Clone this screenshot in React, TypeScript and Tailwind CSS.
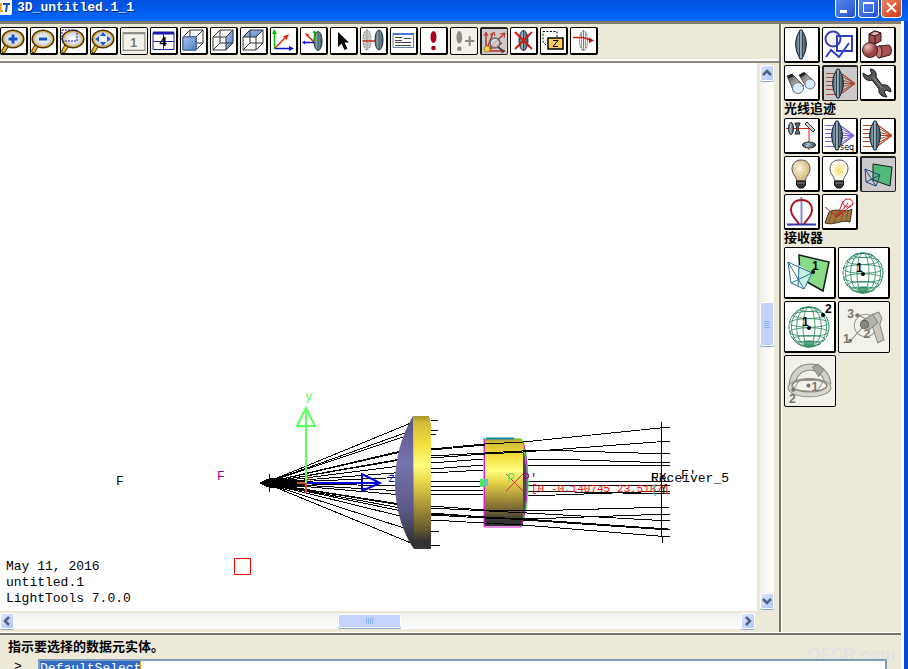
import type { ReactNode } from 'react';

type Variant = 'normal' | 'disabled' | 'pressed';

const variants: Record<Variant, string> = {
  normal: 'bg-white border-t border-l border-r-2 border-b-2 border-black',
  disabled: 'bg-[#f3f2ea] border border-black',
  pressed: 'bg-[#cbc9cb] border-t-2 border-l-2 border-r border-b border-[#222]',
};

const sizes = {
  tool: 'size-7',
  small: 'size-9',
  large: 'size-[52px]',
};

interface ToolProps {
  label: string;
  size?: keyof typeof sizes;
  variant?: Variant;
  children: ReactNode;
}

function Tool({ label, size = 'tool', variant = 'normal', children }: ToolProps) {
  const box = size === 'tool' ? '0 0 25 25' : size === 'small' ? '0 0 33 33' : '0 0 49 49';
  return (
    <button
      type="button"
      aria-label={label}
      title={label}
      disabled={variant === 'disabled'}
      className={`shrink-0 rounded-xs ${sizes[size]} ${variants[variant]}`}
    >
      <svg viewBox={box} className="size-full" fill="none">
        {children}
      </svg>
    </button>
  );
}

/* ---------- toolbar icons (25 x 25) ---------- */

function Magnifier({ children }: { children?: ReactNode }) {
  return (
    <>
      <path d="M6 17 L2.500 23" stroke="#5a3c08" strokeWidth="4.500" strokeLinecap="round" />
      <path d="M6 17 L2.500 23" stroke="#e8b830" strokeWidth="2.500" strokeLinecap="round" />
      <ellipse cx="12" cy="11" rx="10" ry="8" fill="#e4e6ea" stroke="#4a3208" strokeWidth="3" />
      <ellipse cx="12" cy="11" rx="9.500" ry="7.500" fill="url(#glass)" stroke="#e0b030" strokeWidth="1.200" />
      {children}
    </>
  );
}

function Cube({ face }: { face: 'front' | 'right' | 'top' }) {
  const shade = {
    front: 'M2 9 H15 V22 H2 Z',
    right: 'M15 9 L22 2 V15 L15 22 Z',
    top: 'M2 9 L9 2 H22 L15 9 Z',
  };
  return (
    <>
      <path d={shade[face]} fill="url(#faceBlue)" />
      <path d="M2 9 H15 V22 H2 Z M2 9 L9 2 H22 L15 9 M22 2 V15 L15 22 M9 2 V15 H22 M9 15 L2 22" stroke="#333" />
      {face === 'front' && <path d="M2 9 H15 V22 H2 Z" fill="url(#faceBlue)" stroke="#345ea8" />}
    </>
  );
}

function MiniLens({ x, y, h = 19, w = 4, ghost = false }: { x: number; y: number; h?: number; w?: number; ghost?: boolean }) {
  return (
    <>
      <ellipse
        cx={x}
        cy={y}
        rx={w}
        ry={h / 2}
        fill={ghost ? '#f4f4f4' : 'url(#steel)'}
        stroke={ghost ? '#666' : '#23333d'}
        strokeDasharray={ghost ? '2 1' : undefined}
      />
      <path d={`M${x} ${y - h / 2} V${y + h / 2}`} stroke={ghost ? '#777' : '#31424d'} />
      {ghost && <path d={`M${x - 2} ${y - h / 2 + 2} V${y + h / 2 - 2} M${x + 2} ${y - h / 2 + 2} V${y + h / 2 - 2}`} stroke="#999" />}
    </>
  );
}

function Toolbar() {
  return (
    <div className="flex h-[39px] shrink-0 items-start gap-0.5 border-b-2 border-[#8a887c] pt-[3px] shadow-[inset_0_-2px_0_#ffffff]">
      <Tool label="Zoom in">
        <Magnifier>
          <path d="M12 6.500 V15.500 M7.500 11 H16.500" stroke="#1450c8" strokeWidth="3" />
        </Magnifier>
      </Tool>
      <Tool label="Zoom out">
        <Magnifier>
          <path d="M8 11 H16" stroke="#1450c8" strokeWidth="3" />
        </Magnifier>
      </Tool>
      <Tool label="Zoom window">
        <Magnifier />
        <path d="M1 2 H16 V13 H1 Z" stroke="#1818b0" strokeDasharray="2 1" />
      </Tool>
      <Tool label="Zoom to fit">
        <Magnifier>
          <path d="M12 4 L15 8 H9 Z M12 18 L15 14 H9 Z M4 11 L8 8 V14 Z M20 11 L16 8 V14 Z" fill="#1c5cd0" />
        </Magnifier>
      </Tool>
      <Tool label="Single view" variant="disabled">
        <path d="M2 4.500 H23 V21.500 H2 Z" stroke="#8c8c84" />
        <path d="M2 5 H23" stroke="#8c8c84" strokeWidth="2" />
        <text x="9" y="18" fontSize="12" fontWeight="bold" fill="#77776f" fontFamily="Liberation Sans">1</text>
      </Tool>
      <Tool label="Four views">
        <path d="M2 4.500 H23 V21.500 H2 Z M12.500 5 V21 M2 13.500 H23" stroke="#2020a8" />
        <path d="M2 5 H23" stroke="#1818b0" strokeWidth="3" />
        <text x="8.500" y="18" fontSize="13" fontWeight="bold" fill="#000" fontFamily="Liberation Sans">4</text>
      </Tool>
      <Tool label="Front view"><Cube face="front" /></Tool>
      <Tool label="Side view"><Cube face="right" /></Tool>
      <Tool label="Top view"><Cube face="top" /></Tool>
      <Tool label="Axes">
        <path d="M3.500 21 V5" stroke="#08b808" strokeWidth="1.500" />
        <path d="M3.500 1 L6 6 H1 Z" fill="#08b808" />
        <path d="M4 20.500 H19" stroke="#1010d8" strokeWidth="1.500" />
        <path d="M23 20.500 L18 18 V23 Z" fill="#1010d8" />
        <path d="M4 20 L14 10" stroke="#e02010" strokeWidth="1.500" />
        <path d="M18 6 L15.500 12 L12 8.500 Z" fill="#e02010" />
      </Tool>
      <Tool label="Lens axes">
        <MiniLens x={17} y={13} />
        <path d="M13.500 14 V4" stroke="#08b808" strokeWidth="1.500" />
        <path d="M13 14 L6 7" stroke="#e02010" strokeWidth="1.500" />
        <path d="M13 14.500 H3" stroke="#1010d8" strokeWidth="1.500" />
        <path d="M13.500 2 L15.500 5 H11.500 Z" fill="#08b808" />
        <path d="M4 5 L8 6.500 L6 9 Z" fill="#e02010" />
        <path d="M1 14.500 L4 12.500 V16.500 Z" fill="#1010d8" />
      </Tool>
      <Tool label="Select">
        <path d="M7 4 V19 L10.500 15.500 L13.500 22 L16.500 20.500 L13.500 14.500 H18 Z" fill="#000" />
      </Tool>
      <Tool label="Move">
        <MiniLens x={6} y={12} h={20} ghost />
        <path d="M2 13 H14" stroke="#d02818" strokeWidth="1.500" />
        <MiniLens x={18} y={12} h={20} />
      </Tool>
      <Tool label="Properties">
        <path d="M2 5.500 H22.500 V19.500 H2 Z" fill="#fff" stroke="#5c80b8" />
        <path d="M2 6 H23" stroke="#4878d0" strokeWidth="2" />
        <path d="M4 9.500 H11 M4 12.500 H11 M4 14.500 H20 M4 17.500 H20 M13 10.500 H20" stroke="#444" />
      </Tool>
      <Tool label="Recalculate">
        <ellipse cx="12.500" cy="9" rx="3" ry="6" fill="#a8001c" />
        <circle cx="12.500" cy="20" r="2.300" fill="#a8001c" />
      </Tool>
      <Tool label="Recalculate more" variant="disabled">
        <ellipse cx="8" cy="9" rx="2.800" ry="6" fill="#8c8c84" />
        <circle cx="8" cy="20" r="2.200" fill="#8c8c84" />
        <path d="M18 8 V17 M13.500 12.500 H22.500" stroke="#8c8c84" strokeWidth="2" />
      </Tool>
      <Tool label="Ray inspect" variant="pressed">
        <path d="M4 22 V4 M4 22 L11 4 M4 22 L22 5 M4 22 H23 M4 22 L20 14" stroke="#c03028" strokeWidth="1.500" />
        <path d="M2 7 L4 3 L6 7 M8 6 L12 3 L13 7 M18 5 L23 4 L22 9 M19 20 L23 22 L19 24" stroke="#c03028" />
        <circle cx="13" cy="14" r="5" fill="#d8dce0" fillOpacity="0.700" stroke="#666" strokeWidth="1.500" />
        <path d="M16 18 L22 23" stroke="#444" strokeWidth="2" />
        <circle cx="5" cy="20" r="3" fill="#f8d848" stroke="#a08020" />
      </Tool>
      <Tool label="Delete">
        <MiniLens x={12.5} y={12.5} h={20} w={4.5} />
        <path d="M4 4 L21 21 M21 4 L4 21" stroke="#d01c10" strokeWidth="2" />
      </Tool>
      <Tool label="Z order">
        <path d="M2 3.500 H16 V17 H5 L2 14 Z" stroke="#000" strokeDasharray="2 1.500" />
        <path d="M7 10 H22 V21 H7 Z" fill="#ffcc60" stroke="#000" strokeWidth="1.500" />
        <path d="M12 12.500 H17 L12 18.500 H17" stroke="#000" />
      </Tool>
      <Tool label="Ray through lens">
        <MiniLens x={12.5} y={12.5} h={20} ghost />
        <path d="M2 9.500 H12 L20 12" stroke="#d01c10" strokeWidth="1.500" />
        <path d="M23 12.500 L18 9.500 V15 Z" fill="#c01010" />
      </Tool>
    </div>
  );
}

/* ---------- palette icons ---------- */

function Lens({ x = 16 }: { x?: number }) {
  return (
    <>
      <path d={`M${x - 1} 2 Q${x - 10} 16 ${x - 1} 31 H${x + 1} Q${x + 10} 16 ${x + 1} 2 Z`} fill="url(#steel)" stroke="#1c2830" />
      <path d={`M${x - 1.5} 2 V31 M${x + 1.5} 2 V31`} stroke="#33444f" />
    </>
  );
}

function RayFan({ color }: { color: string }) {
  return (
    <>
      <path d="M2 6.500 H13 M2 10.500 H12 M2 14.500 H12 M2 18.500 H12 M2 22.500 H12 M2 27.500 H13" stroke={color} />
      <path d="M15 5 L31 16.500 L15 28 M17 9 L31 16.500 L17 24 M17 13 L31 16.500 L17 20 M17 16.500 H31" stroke={color} />
      <Lens x={14} />
      <path d="M17 6 L31 16.500 L17 27" stroke={color} />
    </>
  );
}

function Bulb({ lit = false }: { lit?: boolean }) {
  return (
    <>
      <path d="M16 3 C10 3 7 7 7 12 C7 17 11 19 12 24 H20 C21 19 25 17 25 12 C25 7 22 3 16 3 Z" fill={lit ? 'url(#bulbLit)' : 'url(#bulb)'} stroke="#555" />
      <path d="M11.500 24 H20.500 V28 L18 31 H14 L11.500 28 Z" fill="#333" stroke="#111" />
      <path d="M12 26 H20" stroke="#888" />
    </>
  );
}

function WireSphere({ cx, cy, r }: { cx: number; cy: number; r: number }) {
  const parallels = [-0.88, -0.6, -0.2, 0.25, 0.6, 0.82];
  return (
    <g stroke="#26855a">
      <circle cx={cx} cy={cy} r={r} strokeDasharray="5 1" />
      {[0.3, 0.62, 0.88].map((k) => (
        <ellipse key={k} cx={cx} cy={cy} rx={r * k} ry={r} strokeWidth="0.800" />
      ))}
      {parallels.map((k) => (
        <ellipse key={k} cx={cx} cy={cy + r * k} rx={r * Math.sqrt(1 - k * k)} ry={r * Math.sqrt(1 - k * k) * 0.22} strokeWidth="0.800" />
      ))}
      <ellipse cx={cx} cy={cy + r * 0.82} rx={r * 0.25} ry={r * 0.1} fill="#58a884" />
    </g>
  );
}

function Mark({ x, y, gray = false, children }: { x: number; y: number; gray?: boolean; children: string }) {
  return (
    <text x={x} y={y} fontSize="12" fontWeight="bold" fill={gray ? '#77776f' : '#000'} fontFamily="Liberation Sans">
      {children}
    </text>
  );
}

function SectionLabel({ children }: { children: string }) {
  return <h2 className="h-[17px] text-[13px] leading-4 font-bold">{children}</h2>;
}

function Palette() {
  return (
    <aside className="w-[122px] shrink-0 border-l-2 border-[#77756a] pt-[3px] pl-[3px] shadow-[inset_1px_0_0_#ffffff]">
      <div className="grid grid-cols-[repeat(3,36px)] gap-0.5">
        <Tool label="Lenses" size="small"><Lens /></Tool>
        <Tool label="2D shapes" size="small">
          <circle cx="10" cy="11" r="7.500" stroke="#3040c0" strokeWidth="2" />
          <path d="M14 8 H29 V23 H14 Z M3 29 L8 22 L16 29 L26 15" stroke="#3040c0" strokeWidth="2" />
        </Tool>
        <Tool label="3D solids" size="small">
          <path d="M8 6 L14 3 L20 5 V13 L14 16 L8 14 Z" fill="#a05050" stroke="#301010" />
          <path d="M8 6 L14 3 L20 5 L14 8 Z" fill="#e0b0b0" stroke="#301010" />
          <path d="M14 8 V16" stroke="#301010" />
          <path d="M18 18 L28 17 C31 19 31 25 29 27 L18 30 Z" fill="#a85050" stroke="#401818" />
          <ellipse cx="18" cy="24" rx="3" ry="6" fill="#c07878" stroke="#401818" />
          <circle cx="9" cy="22" r="7.500" fill="url(#redBall)" stroke="#401818" />
        </Tool>
        <Tool label="View" size="small">
          <path d="M2 10 L8 9 L19 20 L9 26 Z" fill="url(#metal)" stroke="#555" />
          <path d="M14 9 L20 7 L29 15 L22 22 Z" fill="url(#metal)" stroke="#555" />
          <path d="M3 11 L8 9 M15 10 L20 7" stroke="#222" strokeWidth="3" />
          <circle cx="13" cy="22" r="5.500" fill="#d8ecff" stroke="#777" />
          <circle cx="25" cy="18" r="5" fill="#d8ecff" stroke="#777" />
        </Tool>
        <Tool label="Ray trace" size="small" variant="pressed"><RayFan color="#a84830" /></Tool>
        <Tool label="Utilities" size="small">
          <path
            d="M2 7 L7 10 L11 8 L9 3 C14 3 16 7 15 11 L21 19 C26 18 30 21 30 26 L25 24 L23 26 L26 31 C21 31 17 28 18 23 L11 14 C6 16 2 12 2 7 Z"
            fill="#55585a"
            stroke="#151515"
          />
          <path d="M12 11 L21 22" stroke="#9a9c9e" />
        </Tool>
      </div>
      <SectionLabel>光线追迹</SectionLabel>
      <div className="grid grid-cols-[repeat(3,36px)] gap-0.5">
        <Tool label="Optical path" size="small">
          <path d="M1 9.500 H24 V25" stroke="#d82010" />
          <ellipse cx="6" cy="9.500" rx="2.500" ry="6" fill="url(#steel)" stroke="#222" />
          <path d="M10 4 H15 L13 9.500 L15 15 H10 L12 9.500 Z" fill="#5a7484" stroke="#222" />
          <path d="M20 5 L22 3 L30 11 L28 13 Z" fill="#ccc" stroke="#333" />
          <ellipse cx="24" cy="26" rx="6.500" ry="3" fill="url(#steel)" stroke="#222" />
          <path d="M24 28 V31" stroke="#d82010" />
        </Tool>
        <Tool label="Sequential rays" size="small">
          <RayFan color="#7860e0" />
          <text x="17" y="31" fontSize="8" fill="#000" fontFamily="DejaVu Sans">seq</text>
        </Tool>
        <Tool label="Ray fan" size="small"><RayFan color="#b84828" /></Tool>
        <Tool label="Source" size="small"><Bulb /></Tool>
        <Tool label="Lit source" size="small"><Bulb lit /></Tool>
        <Tool label="Receiver" size="small" variant="pressed">
          <path d="M11 6 L30 9 L28 28 L11 22 Z" fill="#50b878" stroke="#102018" />
          <path d="M3 11 L18 17 L14 28 L4 24 Z M3 11 L14 28 M18 17 L4 24" stroke="#204878" />
        </Tool>
        <Tool label="Intensity" size="small">
          <path d="M16.500 2 V30" stroke="#8888d0" strokeWidth="2" />
          <path d="M2 29.500 H31" stroke="#3038b0" strokeWidth="2" />
          <path d="M16.500 5 C9 5 6 10 6 15 C6 21 11 24 14 29 M19 29 C22 24 27 21 27 15 C27 10 24 5 16.500 5" stroke="#a01820" strokeWidth="2" />
        </Tool>
        <Tool label="Scatter" size="small">
          <path d="M6 17 C14 12 22 19 29 14 L27 27 C19 24 11 31 2 28 Z" fill="#a07840" stroke="#403018" />
          <path d="M9 17 L6 28 M14 17 L11 29 M20 17 L18 27 M25 16 L23 26" stroke="#785828" />
          <path d="M2 12 L14 22 L20 6 M14 22 L30 9 M14 22 L25 8" stroke="#d01828" />
          <ellipse cx="25" cy="8" rx="5" ry="4" stroke="#d01828" />
        </Tool>
      </div>
      <SectionLabel>接收器</SectionLabel>
      <div className="grid grid-cols-[repeat(2,52px)] gap-0.5">
        <Tool label="Plane receiver" size="large">
          <path d="M14 7 L44 14 L38 43 L15 30 Z" fill="#88dc88" stroke="#102018" strokeWidth="1.500" />
          <path d="M14 17 L27 25 L19 40 L14 34 Z" fill="#c8f0e4" />
          <path d="M3 14 L27 25 L19 41 L6 35 Z M3 14 L19 41 M6 35 L27 25 M14 19 L13 38" stroke="#28708c" />
          <circle cx="28" cy="24" r="2" fill="#000" />
          <Mark x={27} y={22}>1</Mark>
        </Tool>
        <Tool label="Sphere receiver" size="large">
          <WireSphere cx={24} cy={25} r={20} />
          <circle cx="24" cy="26" r="2" fill="#000" />
          <Mark x={17} y={24}>1</Mark>
        </Tool>
        <Tool label="Two point sphere receiver" size="large">
          <WireSphere cx={24} cy={25} r={20} />
          <circle cx="24" cy="26" r="2" fill="#000" />
          <circle cx="38" cy="13" r="2" fill="#000" />
          <Mark x={17} y={24}>1</Mark>
          <Mark x={40} y={11}>2</Mark>
        </Tool>
        <Tool label="Aimed receiver" size="large" variant="disabled">
          <circle cx="26" cy="23" r="11" stroke="#999990" />
          <path d="M33 12 L39 10 L42 16 L40 22 L44 37 L38 40 L32 22 Z" fill="#c8c8c0" stroke="#88887e" />
          <path d="M11 38 L26 22 M19 13 L36 21" stroke="#88887e" />
          <path d="M22 19 L33 12 L38 20 L30 27 Z" fill="#b4b4ac" stroke="#88887e" />
          <circle cx="25" cy="22" r="4" fill="#88887e" stroke="#66665e" />
          <circle cx="11" cy="38" r="2" fill="#77776f" />
          <circle cx="18" cy="13" r="2" fill="#77776f" />
          <Mark x={8} y={16} gray>3</Mark>
          <Mark x={4} y={40} gray>1</Mark>
          <Mark x={24} y={35} gray>2</Mark>
        </Tool>
        <Tool label="Goniometer receiver" size="large" variant="disabled">
          <path d="M7 29 C8 5 40 5 42 28" stroke="#88887e" strokeWidth="7" />
          <path d="M7 29 C8 5 40 5 42 28" stroke="#d2d2ca" strokeWidth="5" />
          <path d="M27 11 L32 8 L38 13 L33 20 Z" fill="#a4a49c" stroke="#88887e" />
          <ellipse cx="24" cy="31" rx="21" ry="9" fill="#d8d8d0" stroke="#88887e" />
          <ellipse cx="24" cy="29" rx="17" ry="6" fill="#f3f2ea" stroke="#88887e" strokeWidth="1.500" />
          <path d="M8 33 L14 24 H38 L31 35 Z" stroke="#99998f" />
          <circle cx="23" cy="29" r="2" fill="#77776f" />
          <circle cx="8" cy="33" r="2" fill="#77776f" />
          <Mark x={26} y={34} gray>1</Mark>
          <Mark x={4} y={46} gray>2</Mark>
        </Tool>
      </div>
    </aside>
  );
}

/* ---------- scene ---------- */

const incoming = [
  [411, 423], [405, 433], [403, 437], [401, 451], [401, 452], [401, 459], [400, 460], [400, 466],
  [407, 472], [411, 477], [403, 486], [403, 491], [402, 495], [400, 504], [400, 505], [406, 509],
  [402, 511], [400, 516], [407, 529], [411, 543],
];

// segments in front of the second element
const between = [
  '431,463 484,459', '431,469 484,465', '431,473 484,470', '431,481 484,481',
  '431,486 484,486', '431,490 484,490', '431,495 484,494',
  '527,459 580,460 670,463', '527,465 670,466', '527,481 670,481', '527,485 670,486',
  '527,491 670,494', '527,496 670,491',
];

const through = [
  '431,449 485,444 523,442 670,427', '431,450 485,445', '431,458 485,454 523,452 670,441',
  '431,456 540,450 670,454', '431,506 484,510 527,511 670,507', '431,508 527,513 670,521',
  '431,513 484,517 523,520 670,530', '431,514 523,519 668,529',
  '431,515 484,518 527,519 670,514', '431,520 484,523 523,525 670,537',
];

function Scene() {
  return (
    <svg
      viewBox="0 63 757 548"
      preserveAspectRatio="xMinYMin meet"
      className="size-full font-['Liberation_Mono',monospace]"
      fill="none"
      role="img"
      aria-label="3D view of a two lens system"
    >
      <g stroke="#000" shapeRendering="crispEdges">
        {incoming.map(([x, y]) => (
          <path key={`${x}-${y}`} d={`M265 483 L${x} ${y}`} />
        ))}
        <path d="M269.500 474 V492" />
        <path d="M260 483 L271 478 L306 481 V486 L271 488 Z" fill="#000" />
        <path d="M431 420.500 H438 M431 430.500 H438 M431 434.500 H436 M431 531.500 H439 M431 545.500 H440" />
        {between.map((points) => (
          <polyline key={points} points={points} />
        ))}
      </g>

      {/* first lens */}
      <path d="M413 416 C401 436 395 460 395 483 C395 507 402 532 414 549 H420 V416 Z" fill="url(#violet)" />
      <path d="M413 416 H429 L431 424 V549 H414 Z" fill="url(#gold)" />

      {/* second lens */}
      <path d="M521 439 C530 460 530 505 521 526 Z" fill="#48465c" stroke="#60f860" strokeWidth="2" />
      <path d="M484 438 H520 L523 442 V526 H484 Z" fill="url(#gold)" />
      <path d="M484.500 438 V527 H521 M523 441 C529 460 529 505 521 527" stroke="#d020d0" />
      <path d="M483.500 527 V438.500 H521 L524 443" stroke="#60f860" />
      <path d="M486 438.500 H514" stroke="#1888a8" strokeWidth="2" />
      <path d="M480 479 H484 V487 H480 Z" fill="#50e850" />
      <path d="M484 479 H488 V486 H484 Z" fill="#58c8c0" />

      <g stroke="#000" shapeRendering="crispEdges">
        {through.map((points) => (
          <polyline key={points} points={points} />
        ))}
        <path d="M661.500 422 V537 M662.500 537 V543" />
      </g>

      {/* axes */}
      <path d="M297 483 H306 V493" stroke="#d84830" strokeWidth="2" />
      <path d="M306 483 V408 M306 408 L297 426 H315 Z" stroke="#60ff60" strokeWidth="2" />
      <path d="M307 483 H380 M362 474 V491 L380 483 Z" stroke="#0000d8" strokeWidth="2" />
      <text x="305" y="400" fontSize="13" fill="#60f860">y</text>
      <text x="388" y="482" fontSize="12" fill="#0000d8">z</text>
      <text x="306" y="481" fontSize="9" fill="#d84830">x</text>

      <path d="M506 474 L523 491 M523 474 L506 491" stroke="#e02060" />
      <text x="507" y="482" fontSize="13" fill="#60e860">P</text>
      <text x="522" y="482" fontSize="13" fill="#900090">P'</text>
      <text x="116" y="485" fontSize="13" fill="#000">F</text>
      <text x="217" y="480" fontSize="13" fill="#900090">F</text>
      <text x="531" y="492" fontSize="11" fill="#ff0000">[0 -0.140745 23.5187]</text>
      <text x="651" y="493" fontSize="12" fill="#20c8c8">(</text>
      <text x="651" y="482" fontSize="13" fill="#000">Receiver_5</text>
      <text x="651" y="482" fontSize="13" fill="#000">EX</text>
      <text x="681" y="479" fontSize="13" fill="#000">F'</text>
      <text x="660" y="493" fontSize="12" fill="#000">Y</text>
      <path d="M234.500 558.500 H250.500 V574.500 H234.500 Z" stroke="#ff0000" />
    </svg>
  );
}

/* ---------- window chrome ---------- */

function ScrollButton({ label, path }: { label: string; path: string }) {
  return (
    <button
      type="button"
      aria-label={label}
      className="flex h-4 w-3.5 shrink-0 items-center justify-center rounded-xs border border-white bg-linear-to-br from-[#dce6ff] to-[#b0c8f8] shadow-[0_1px_0_#8ca8d8]"
    >
      <svg viewBox="0 0 10 10" className="size-2.5" fill="none">
        <path d={path} stroke="#4d6185" strokeWidth="2.500" />
      </svg>
    </button>
  );
}

function VerticalScroll() {
  return (
    <div className="flex w-[22px] shrink-0 flex-col pt-0.5 pb-0.5 pl-[3px]">
      <div className="flex w-3.5 flex-1 flex-col bg-linear-to-r from-[#f0f0ec] to-white">
        <ScrollButton label="Scroll up" path="M1 7 L5 3 L9 7" />
        <div className="grow-[221]" />
        <div className="flex h-11 w-3.5 shrink-0 flex-col items-center justify-center gap-px rounded-xs border border-white bg-[#c3d3fc] shadow-[0_1px_0_#8ca8d8]">
          {[0, 1, 2, 3].map((i) => (
            <span key={i} className="h-px w-1.5 bg-[#8cb0f8]" />
          ))}
        </div>
        <div className="grow-[246]" />
        <ScrollButton label="Scroll down" path="M1 3 L5 7 L9 3" />
      </div>
    </div>
  );
}

function HorizontalScroll() {
  return (
    <div className="flex h-[22px] shrink-0 items-start pt-0.5 pr-6">
      <div className="flex h-4 flex-1 bg-linear-to-b from-[#f0f0ec] to-white">
        <ScrollButton label="Scroll left" path="M7 1 L3 5 L7 9" />
        <div className="grow-[322]" />
        <div className="flex h-3.5 w-[63px] shrink-0 items-center justify-center gap-px self-center rounded-xs border border-white bg-[#c3d3fc] shadow-[0_1px_0_#8ca8d8]">
          {[0, 1, 2, 3].map((i) => (
            <span key={i} className="h-1.5 w-px bg-[#8cb0f8]" />
          ))}
        </div>
        <div className="grow-[337]" />
        <ScrollButton label="Scroll right" path="M3 1 L7 5 L3 9" />
      </div>
    </div>
  );
}

function TitleBar() {
  const base = 'flex h-[18px] w-[21px] items-center justify-center rounded-b-sm border border-t-0 border-white';
  return (
    <header className="flex h-[21px] shrink-0 items-start bg-linear-to-b from-[#0050dc] to-[#0068ff]">
      <div className="h-[15px] w-3 overflow-hidden rounded-br-xs bg-white">
        <svg viewBox="0 0 12 15" className="h-full w-full" fill="none">
          <path d="M1 3 L0 11 H3" stroke="#f0a020" strokeWidth="2" />
          <path d="M3 4 H10 M7 4 L6 12" stroke="#1850b8" strokeWidth="2" />
        </svg>
      </div>
      <h1 className="ml-[5px] flex-1 truncate font-['Liberation_Mono',monospace] text-[13px] leading-4 font-bold text-white [text-shadow:1px_1px_0_#002a80]">
        3D_untitled.1_1
      </h1>
      <div className="flex gap-0.5 pr-1.5">
        <button type="button" aria-label="Minimize" className={`${base} bg-linear-to-br from-[#5a88f0] to-[#2050d0]`}>
          <svg viewBox="0 0 19 17" className="h-full w-full"><path d="M4 10 H11 V13 H4 Z" fill="#fff" /></svg>
        </button>
        <button type="button" aria-label="Maximize" className={`${base} bg-linear-to-br from-[#5a88f0] to-[#2050d0]`}>
          <svg viewBox="0 0 19 17" className="h-full w-full" fill="none">
            <path d="M4.500 3 H14.500 V12.500 H4.500 Z" stroke="#fff" />
            <path d="M4 3 H15" stroke="#fff" strokeWidth="2" />
          </svg>
        </button>
        <button type="button" aria-label="Close" className={`${base} bg-linear-to-br from-[#f08060] to-[#d03810]`}>
          <svg viewBox="0 0 19 17" className="h-full w-full"><path d="M5 3 L14 12 M14 3 L5 12" stroke="#fff" strokeWidth="2" /></svg>
        </button>
      </div>
    </header>
  );
}

function Gradients() {
  return (
    <svg className="absolute size-0" aria-hidden="true">
      <defs>
        <radialGradient id="glass">
          <stop offset="0" stopColor="#fff" />
          <stop offset="1" stopColor="#c4ccd8" />
        </radialGradient>
        <linearGradient id="faceBlue" x1="0" y1="0" x2="1" y2="1">
          <stop offset="0" stopColor="#a8c4f0" />
          <stop offset="1" stopColor="#5080c8" />
        </linearGradient>
        <linearGradient id="steel">
          <stop offset="0" stopColor="#3c5262" />
          <stop offset="0.4" stopColor="#a0bccc" />
          <stop offset="1" stopColor="#30424e" />
        </linearGradient>
        <linearGradient id="metal" x1="0" y1="0" x2="1" y2="1">
          <stop offset="0" stopColor="#444" />
          <stop offset="0.5" stopColor="#aaa" />
          <stop offset="1" stopColor="#666" />
        </linearGradient>
        <radialGradient id="redBall" cx="0.35" cy="0.3">
          <stop offset="0" stopColor="#ecc0c0" />
          <stop offset="1" stopColor="#984444" />
        </radialGradient>
        <radialGradient id="bulb" cx="0.4" cy="0.4">
          <stop offset="0" stopColor="#fdf4dc" />
          <stop offset="1" stopColor="#dcc088" />
        </radialGradient>
        <radialGradient id="bulbLit" cx="0.5" cy="0.5">
          <stop offset="0" stopColor="#f8dc60" />
          <stop offset="0.7" stopColor="#fffbe8" />
          <stop offset="1" stopColor="#fff" />
        </radialGradient>
        <linearGradient id="violet" x1="0" y1="0" x2="0" y2="1">
          <stop offset="0" stopColor="#545480" />
          <stop offset="0.35" stopColor="#7674ae" />
          <stop offset="0.7" stopColor="#5c5a88" />
          <stop offset="0.95" stopColor="#333" />
        </linearGradient>
        <linearGradient id="gold" x1="0" y1="0" x2="0" y2="1">
          <stop offset="0" stopColor="#a89430" />
          <stop offset="0.05" stopColor="#d4bc38" />
          <stop offset="0.22" stopColor="#f4e040" />
          <stop offset="0.37" stopColor="#ffff80" />
          <stop offset="0.5" stopColor="#e8d448" />
          <stop offset="0.7" stopColor="#a08c38" />
          <stop offset="0.85" stopColor="#665a30" />
          <stop offset="0.94" stopColor="#333" />
        </linearGradient>
      </defs>
    </svg>
  );
}

export default function App() {
  return (
    <div className="flex h-screen flex-col overflow-hidden bg-[#ece9d8] font-['Liberation_Sans','Noto_Sans_CJK_SC',sans-serif] text-black">
      <Gradients />
      <TitleBar />
      <div className="flex min-h-0 flex-1 flex-col border-r-4 border-[#0048e0]">
        <div className="flex min-h-0 flex-1 flex-col border-r-3 border-white">
          <div className="flex min-h-0 flex-1 border-t-3 border-[#807e72]">
            <main className="flex min-w-0 flex-1 flex-col">
              <Toolbar />
              <div className="flex min-h-0 flex-1">
                <div className="relative min-w-0 flex-1 bg-white">
                  <Scene />
                  <div className="absolute bottom-1 left-1.5 font-['Liberation_Mono',monospace] text-[13px] leading-4">
                    <p>May 11, 2016</p>
                    <p>untitled.1</p>
                    <p>LightTools 7.0.0</p>
                  </div>
                </div>
                <VerticalScroll />
              </div>
              <HorizontalScroll />
            </main>
            <Palette />
          </div>
          <footer className="relative h-9 shrink-0 overflow-hidden border-t-2 border-[#77756a] pt-1 shadow-[0_-1px_0_#ffffff]">
            <label htmlFor="command" className="block pl-2 text-[13px] leading-4 font-bold">
              指示要选择的数据元实体。
            </label>
            <span className="absolute right-1.5 bottom-1 text-[17px] leading-5 font-bold text-[#e2e1e4]">OFCR.com</span>
            <div className="relative mt-1 mr-3.5 flex font-['Liberation_Mono',monospace] text-[13px] leading-4">
              <span className="w-[38px] shrink-0 pl-3.5">&gt;</span>
              <div className="flex-1 border-2 border-[#7f9db9] bg-white">
                <input
                  id="command"
                  type="text"
                  defaultValue="DefaultSelect"
                  className="block h-4 w-[101px] border-r border-[#f0a020] bg-[#316ac5] text-white outline-none"
                />
              </div>
            </div>
          </footer>
        </div>
      </div>
    </div>
  );
}
